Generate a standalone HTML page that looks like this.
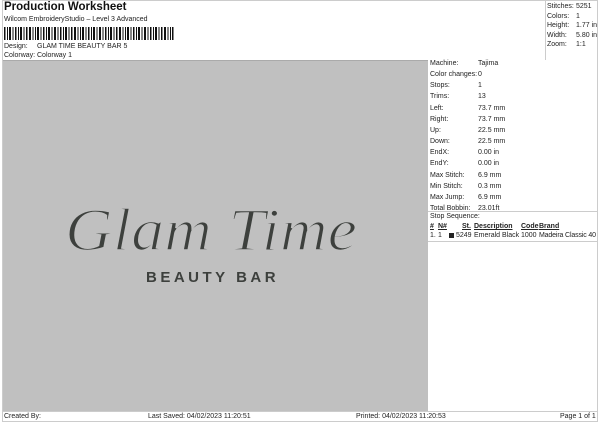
<!DOCTYPE html>
<html><head><style>
body{margin:0;width:600px;height:424px;background:#fff;position:relative;overflow:hidden;font-family:"Liberation Sans",Arial,sans-serif;font-size:7px;color:#222}
.a{position:absolute;white-space:nowrap;line-height:9px}
</style></head><body>
<div class="a" style="left:4px;top:1px;font-size:11.5px;font-weight:bold;line-height:13px;color:#111">Production Worksheet</div>
<div class="a" style="left:4px;top:15px">Wilcom EmbroideryStudio – Level 3 Advanced</div>
<svg class="a" style="left:4px;top:27px" width="170" height="13">
<g fill="#111">
<rect x="0" width="1.5" height="13"/><rect x="3" width="1" height="13"/><rect x="5" width="2" height="13"/><rect x="8.5" width="1" height="13"/><rect x="11" width="1.5" height="13"/><rect x="14" width="1" height="13"/><rect x="16" width="2" height="13"/><rect x="19.5" width="1" height="13"/><rect x="22" width="1.5" height="13"/><rect x="25" width="2" height="13"/><rect x="28.5" width="1" height="13"/><rect x="31" width="1" height="13"/><rect x="33" width="2" height="13"/><rect x="36.5" width="1" height="13"/><rect x="39" width="1.5" height="13"/><rect x="42" width="1" height="13"/><rect x="44" width="2" height="13"/><rect x="47.5" width="1" height="13"/><rect x="50" width="2" height="13"/><rect x="53.5" width="1" height="13"/><rect x="56" width="1.5" height="13"/><rect x="59" width="1" height="13"/><rect x="61" width="2" height="13"/><rect x="64.5" width="1" height="13"/><rect x="67" width="1.5" height="13"/><rect x="70" width="2" height="13"/><rect x="73.5" width="1" height="13"/><rect x="76" width="1" height="13"/><rect x="78" width="2" height="13"/><rect x="81.5" width="1" height="13"/><rect x="84" width="1.5" height="13"/><rect x="87" width="1" height="13"/><rect x="89" width="2" height="13"/><rect x="92.5" width="1" height="13"/><rect x="95" width="2" height="13"/><rect x="98.5" width="1" height="13"/><rect x="101" width="1.5" height="13"/><rect x="104" width="1" height="13"/><rect x="106" width="2" height="13"/><rect x="109.5" width="1" height="13"/><rect x="112" width="1.5" height="13"/><rect x="115" width="2" height="13"/><rect x="118.5" width="1" height="13"/><rect x="121" width="1" height="13"/><rect x="123" width="2" height="13"/><rect x="126.5" width="1" height="13"/><rect x="129" width="1.5" height="13"/><rect x="132" width="1" height="13"/><rect x="134" width="2" height="13"/><rect x="137.5" width="1" height="13"/><rect x="140" width="2" height="13"/><rect x="143.5" width="1" height="13"/><rect x="146" width="1.5" height="13"/><rect x="149" width="1" height="13"/><rect x="151" width="2" height="13"/><rect x="154.5" width="1" height="13"/><rect x="157" width="1.5" height="13"/><rect x="160" width="2" height="13"/><rect x="163.5" width="1" height="13"/><rect x="166" width="1" height="13"/><rect x="168" width="1.5" height="13"/>
</g></svg>
<div class="a" style="left:4px;top:42px">Design:</div><div class="a" style="left:37px;top:42px">GLAM TIME BEAUTY BAR 5</div>
<div class="a" style="left:4px;top:51px">Colorway:</div><div class="a" style="left:37px;top:51px">Colorway 1</div>
<div class="a" style="left:2px;top:0;width:596px;height:422px;border:1px solid #ccc;box-sizing:border-box"></div>
<div class="a" style="left:545px;top:0;width:1px;height:60px;background:#ccc"></div>
<div class="a" style="left:547px;top:2px;line-height:9.5px">Stitches:<br>Colors:<br>Height:<br>Width:<br>Zoom:</div>
<div class="a" style="left:576px;top:2px;line-height:9.5px">5251<br>1<br>1.77 in<br>5.80 in<br>1:1</div>
<div class="a" style="left:3px;top:60px;width:425px;height:351px;background:#c0c0c0;border-top:1px solid #aaa"></div>
<svg class="a" style="left:3px;top:60px" width="425" height="351">
<text x="62" y="190" font-family="Liberation Serif,serif" font-style="italic" font-size="60" fill="#3d403d" stroke="#c0c0c0" stroke-width="1.4" paint-order="stroke" textLength="292" lengthAdjust="spacingAndGlyphs">Glam Time</text>
<text x="62" y="190" font-family="Liberation Serif,serif" font-style="italic" font-size="60" fill="none" stroke="#c0c0c0" stroke-width="1.6" textLength="292" lengthAdjust="spacingAndGlyphs">Glam Time</text>
<text x="143" y="222" font-family="Liberation Sans,sans-serif" font-weight="bold" font-size="15" fill="#3d403d" letter-spacing="3.5">BEAUTY BAR</text>
</svg>
<div class="a" style="left:430px;top:58px;line-height:11.15px">Machine:<br>Color changes:<br>Stops:<br>Trims:<br>Left:<br>Right:<br>Up:<br>Down:<br>EndX:<br>EndY:<br>Max Stitch:<br>Min Stitch:<br>Max Jump:<br>Total Bobbin:</div>
<div class="a" style="left:478px;top:58px;line-height:11.15px">Tajima<br>0<br>1<br>13<br>73.7 mm<br>73.7 mm<br>22.5 mm<br>22.5 mm<br>0.00 in<br>0.00 in<br>6.9 mm<br>0.3 mm<br>6.9 mm<br>23.01ft</div>
<div class="a" style="left:428px;top:211px;width:170px;height:1px;background:#ccc"></div>
<div class="a" style="left:430px;top:212px">Stop Sequence:</div>
<div class="a" style="left:430px;top:222px;font-weight:bold;text-decoration:underline">#</div>
<div class="a" style="left:438px;top:222px;font-weight:bold;text-decoration:underline">N#</div>
<div class="a" style="left:462px;top:222px;font-weight:bold;text-decoration:underline">St.</div>
<div class="a" style="left:474px;top:222px;font-weight:bold;text-decoration:underline">Description</div>
<div class="a" style="left:521px;top:222px;font-weight:bold;text-decoration:underline">Code</div>
<div class="a" style="left:539px;top:222px;font-weight:bold;text-decoration:underline">Brand</div>
<div class="a" style="left:430px;top:231px">1.</div><div class="a" style="left:438px;top:231px">1</div>
<div class="a" style="left:449px;top:233px;width:5px;height:5px;background:#222"></div>
<div class="a" style="left:456px;top:231px">5249</div><div class="a" style="left:474px;top:231px">Emerald Black</div>
<div class="a" style="left:521px;top:231px">1000</div><div class="a" style="left:539px;top:231px;letter-spacing:-0.15px">Madeira Classic 40</div>
<div class="a" style="left:428px;top:241px;width:170px;height:1px;background:#ccc"></div>
<div class="a" style="left:2px;top:411px;width:596px;height:1px;background:#ccc"></div>
<div class="a" style="left:4px;top:412px">Created By:</div>
<div class="a" style="left:148px;top:412px">Last Saved: 04/02/2023 11:20:51</div>
<div class="a" style="left:356px;top:412px">Printed: 04/02/2023 11:20:53</div>
<div class="a" style="left:560px;top:412px">Page 1 of 1</div>
</body></html>
